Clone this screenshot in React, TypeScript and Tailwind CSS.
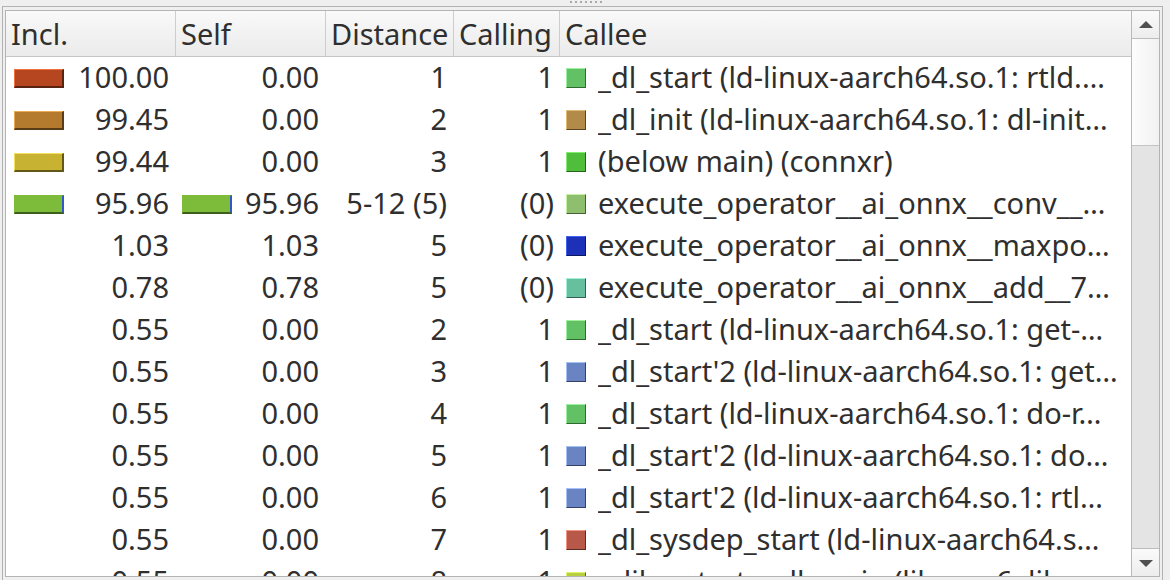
import React from "react";

interface CalleeRow {
  incl: string;
  self: string;
  distance: string;
  calling: string;
  name: string;
  inclBar?: string;
  selfBar?: string;
  square: string;
}

const GREEN = "bg-[#63c165] border-t-[#9ef09e] border-l-[#9ef09e] border-b-[#2e6a30] border-r-[#2e6a30]";
const SLATE = "bg-[#6a83c3] border-t-[#a6c0f8] border-l-[#a6c0f8] border-b-[#344064] border-r-[#344064]";

const rows: CalleeRow[] = [
  {
    incl: "100.00",
    self: "0.00",
    distance: "1",
    calling: "1",
    name: "_dl_start (ld-linux-aarch64.so.1: rtld.…",
    inclBar: "bg-[#b5461f] border-t-[#f2703c] border-l-[#f2703c] border-b-[#5a2210] border-r-[#5a2210]",
    square: GREEN,
  },
  {
    incl: "99.45",
    self: "0.00",
    distance: "2",
    calling: "1",
    name: "_dl_init (ld-linux-aarch64.so.1: dl-init…",
    inclBar: "bg-[#b47a2e] border-t-[#eeaa50] border-l-[#eeaa50] border-b-[#5a3c16] border-r-[#5a3c16]",
    square: "bg-[#b38b48] border-t-[#e2ba72] border-l-[#e2ba72] border-b-[#5a4420] border-r-[#5a4420]",
  },
  {
    incl: "99.44",
    self: "0.00",
    distance: "3",
    calling: "1",
    name: "(below main) (connxr)",
    inclBar: "bg-[#c8b232] border-t-[#f4e060] border-l-[#f4e060] border-b-[#645818] border-r-[#645818]",
    square: "bg-[#4fbe3b] border-t-[#84ec72] border-l-[#84ec72] border-b-[#286020] border-r-[#286020]",
  },
  {
    incl: "95.96",
    self: "95.96",
    distance: "5-12 (5)",
    calling: "(0)",
    name: "execute_operator__ai_onnx__conv__…",
    inclBar: "bg-[#7dbc3a] border-t-[#7dbc3a] border-l-[#7dbc3a] border-b-[#3e5e1c] border-r-[#3058c8]",
    selfBar: "bg-[#7dbc3a] border-t-[#7dbc3a] border-l-[#7dbc3a] border-b-[#3e5e1c] border-r-[#3058c8]",
    square: "bg-[#8fbe6f] border-t-[#c4f2a4] border-l-[#c4f2a4] border-b-[#48603a] border-r-[#48603a]",
  },
  {
    incl: "1.03",
    self: "1.03",
    distance: "5",
    calling: "(0)",
    name: "execute_operator__ai_onnx__maxpo…",
    square: "bg-[#1c30b8] border-t-[#4262f0] border-l-[#4262f0] border-b-[#0c1860] border-r-[#0c1860]",
  },
  {
    incl: "0.78",
    self: "0.78",
    distance: "5",
    calling: "(0)",
    name: "execute_operator__ai_onnx__add__7…",
    square: "bg-[#66bf9f] border-t-[#a2f0d2] border-l-[#a2f0d2] border-b-[#336050] border-r-[#336050]",
  },
  { incl: "0.55", self: "0.00", distance: "2", calling: "1", name: "_dl_start (ld-linux-aarch64.so.1: get-…", square: GREEN },
  { incl: "0.55", self: "0.00", distance: "3", calling: "1", name: "_dl_start'2 (ld-linux-aarch64.so.1: get…", square: SLATE },
  { incl: "0.55", self: "0.00", distance: "4", calling: "1", name: "_dl_start (ld-linux-aarch64.so.1: do-r…", square: GREEN },
  { incl: "0.55", self: "0.00", distance: "5", calling: "1", name: "_dl_start'2 (ld-linux-aarch64.so.1: do…", square: SLATE },
  { incl: "0.55", self: "0.00", distance: "6", calling: "1", name: "_dl_start'2 (ld-linux-aarch64.so.1: rtl…", square: SLATE },
  {
    incl: "0.55",
    self: "0.00",
    distance: "7",
    calling: "1",
    name: "_dl_sysdep_start (ld-linux-aarch64.s…",
    square: "bg-[#b85848] border-t-[#f29482] border-l-[#f29482] border-b-[#5c2c24] border-r-[#5c2c24]",
  },
  {
    incl: "0.55",
    self: "0.00",
    distance: "8",
    calling: "1",
    name: "__libc_start_call_main (libc.so.6: libc…",
    square: "bg-[#b8d040] border-t-[#e2f272] border-l-[#e2f272] border-b-[#5c6820] border-r-[#5c6820]",
  },
];

function Bar({ className }: { className: string }) {
  return <div className={`w-[50px] h-[19px] shrink-0 border-t border-l border-b-2 border-r-2 ${className}`} />;
}

function Square({ className }: { className: string }) {
  return <div className={`w-[20px] h-[20px] shrink-0 border ${className}`} />;
}

function HeaderCell({ label, width }: { label: string; width: string }) {
  return (
    <div className={`${width} shrink-0 h-full flex items-center pl-[5px] border-r border-[#cdcdcd]`}>
      {label}
    </div>
  );
}

function ScrollBar() {
  return (
    <div className="w-[28px] shrink-0 h-full border-l border-[#b9b9b9] bg-[#e4e4e4] flex flex-col">
      <div className="h-[28px] shrink-0 bg-gradient-to-b from-[#fafafa] to-[#ededed] border-b border-[#bdbdbd] flex items-center justify-center">
        <svg width="14" height="8" viewBox="0 0 14 8">
          <path d="M7 0 L14 7 L0 7 Z" fill="#4f4f4f" />
        </svg>
      </div>
      <div className="h-[107px] shrink-0 bg-gradient-to-r from-[#fdfdfd] to-[#f1f1f1] border-b border-[#c4c4c4]" />
      <div className="flex-1" />
      <div className="h-[28px] shrink-0 bg-gradient-to-b from-[#fafafa] to-[#ededed] border-t border-[#bdbdbd] flex items-center justify-center">
        <svg width="14" height="8" viewBox="0 0 14 8">
          <path d="M0 1 L14 1 L7 8 Z" fill="#4f4f4f" />
        </svg>
      </div>
    </div>
  );
}

export default function App() {
  return (
    <div
      className="w-[1170px] h-[580px] overflow-hidden bg-[#efefef] text-[#2f2f2f] text-[29px] leading-[40px] flex flex-col"
      style={{ fontFamily: '"Noto Sans", "Open Sans", sans-serif' }}
    >
      {/* splitter handle */}
      <div className="h-[6px] shrink-0 flex justify-center gap-[3px] pt-[1px] pl-[2px]">
        {Array.from({ length: 7 }).map((_, i) => (
          <div key={i} className="w-[2px] h-[2px] bg-[#a9a9a9]" />
        ))}
      </div>

      <div className="ml-[2px] mr-[7px] h-[590px] shrink-0 border border-[#b2b2b2] pt-[3px] px-[2px]">
        <div className="h-[567px] border border-[#b4b4b4] bg-white flex">
          <div className="flex-1 flex flex-col overflow-hidden">
            {/* header */}
            <div className="h-[46px] shrink-0 flex bg-gradient-to-b from-[#f9f9f9] to-[#ebebeb] border-b border-[#c6c6c6]">
              <HeaderCell label="Incl." width="w-[170px]" />
              <HeaderCell label="Self" width="w-[150px]" />
              <HeaderCell label="Distance" width="w-[128px]" />
              <HeaderCell label="Calling" width="w-[106px]" />
              <div className="flex-1 h-full flex items-center pl-[5px]">Callee</div>
            </div>

            {/* rows */}
            <div className="flex-1 overflow-hidden">
              {rows.map((r, i) => (
                <div key={i} className="h-[42px] pb-[3px] flex items-center whitespace-nowrap">
                  <div className="w-[170px] shrink-0 flex items-center pl-[8px] pr-[7px]">
                    {r.inclBar ? (
                      <div className="mt-[3px]">
                        <Bar className={r.inclBar} />
                      </div>
                    ) : null}
                    <span className="ml-auto">{r.incl}</span>
                  </div>
                  <div className="w-[150px] shrink-0 flex items-center pl-[6px] pr-[7px]">
                    {r.selfBar ? (
                      <div className="mt-[3px]">
                        <Bar className={r.selfBar} />
                      </div>
                    ) : null}
                    <span className="ml-auto">{r.self}</span>
                  </div>
                  <div className="w-[128px] shrink-0 text-right pr-[7px]">{r.distance}</div>
                  <div className="w-[106px] shrink-0 text-right pr-[6px]">{r.calling}</div>
                  <div className="flex-1 min-w-0 flex items-center pl-[6px] gap-[12px] overflow-hidden">
                    <div className="mt-[3px]">
                      <Square className={r.square} />
                    </div>
                    <span className="overflow-hidden">{r.name}</span>
                  </div>
                </div>
              ))}
            </div>
          </div>
          <ScrollBar />
        </div>
      </div>
    </div>
  );
}
